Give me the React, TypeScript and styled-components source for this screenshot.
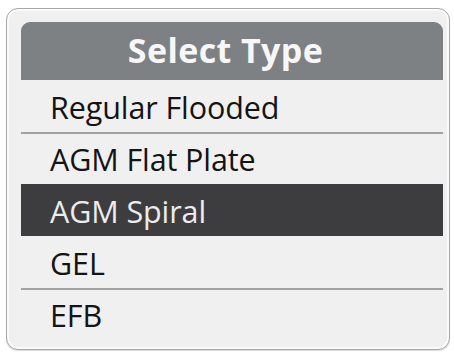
import React from "react";
import styled, { createGlobalStyle } from "styled-components";

const Global = createGlobalStyle`
  html, body { margin: 0; padding: 0; background: #ffffff; }
  body { font-family: "Open Sans", "Noto Sans", sans-serif; }
`;

const Page = styled.div`
  padding: 8px 4px 3px 6px;
  width: 454px;
  height: 353px;
  box-sizing: border-box;
`;

const Frame = styled.div`
  width: 444px;
  height: 342px;
  box-sizing: border-box;
  border: 1px solid #a8a8a8;
  border-radius: 12px;
  background: #f0f0f0;
  box-shadow: inset 0 0 0 2px #fbfbfb, 0 1px 1px rgba(0, 0, 0, 0.15);
  padding: 13px 6px 0 14px;
  display: flex;
  flex-direction: column;
`;

const Header = styled.div`
  height: 58px;
  background: #7e8184;
  border-radius: 9px 9px 0 0;
  display: flex;
  align-items: center;
  justify-content: center;
  color: #f7f7f7;
  font-weight: 700;
  font-size: 34px;
  letter-spacing: 0.4px;
  padding-bottom: 3px;
  padding-right: 13px;
  box-sizing: border-box;
`;

const List = styled.div`
  display: flex;
  flex-direction: column;
`;

const Row = styled.div<{ $selected?: boolean; $divider?: boolean }>`
  height: 52px;
  box-sizing: border-box;
  display: flex;
  align-items: center;
  padding-left: 29px;
  font-size: 30.5px;
  letter-spacing: -0.1px;
  color: ${(p) => (p.$selected ? "#ececec" : "#141414")};
  background: ${(p) => (p.$selected ? "#3d3d3f" : "transparent")};
  border-top: 2px solid ${(p) => (p.$divider ? "#a2a2a2" : "transparent")};
`;

const items = ["Regular Flooded", "AGM Flat Plate", "AGM Spiral", "GEL", "EFB"];
const selected = 2;

export default function App() {
  return (
    <>
      <Global />
      <Page>
        <Frame>
          <Header>Select Type</Header>
          <List>
            {items.map((it, i) => (
              <Row
                key={it}
                $selected={i === selected}
                $divider={i > 0 && i !== selected && i !== selected + 1}
              >
                {it}
              </Row>
            ))}
          </List>
        </Frame>
      </Page>
    </>
  );
}
